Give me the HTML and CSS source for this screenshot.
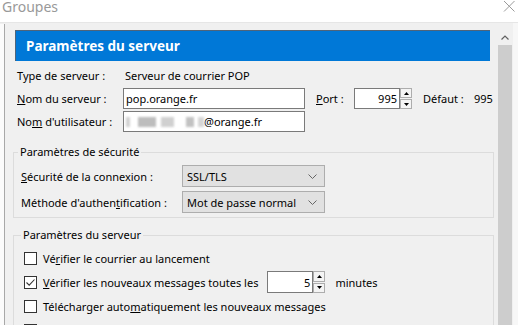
FILE: index.html
```html
<html>
<head>
    <title>Groupes</title>
    <link rel="stylesheet" href="styles.css">
</head>
<body>
    <div class="titlebar">
        <span class="title">Groupes</span>
        <svg class="close" width="12" height="11" viewBox="0 0 12 11"><path d="M1 0L11.5 10.5M11.5 0L1 10.5" stroke="#9a9a9a" stroke-width="1" fill="none"/></svg>
    </div>

    <div class="window">
        <div class="sidebar"></div>

        <div class="pane">
            <div class="header">Paramètres du serveur</div>

            <div class="row first">
                <span class="label">Type de serveur :</span>
                <span class="value">Serveur de courrier POP</span>
            </div>
            <div class="row">
                <span class="label"><u>N</u>om du serveur :</span>
                <span class="field host">pop.orange.fr</span>
                <span class="port-label"><u>P</u>ort :</span>
                <span class="field port">995</span>
                <span class="spin">
                    <span class="spin-btn"><svg width="5" height="3" viewBox="0 0 5 3"><path d="M2.5 0L5 3H0Z" fill="#000"/></svg></span>
                    <span class="spin-btn"><svg width="5" height="3" viewBox="0 0 5 3"><path d="M0 0H5L2.5 3Z" fill="#000"/></svg></span>
                </span>
                <span class="default">Défaut :</span>
                <span>995</span>
            </div>
            <div class="row">
                <span class="label">No<u>m</u> d'utilisateur :</span>
                <span class="field host">
                    <span class="blur">
                        <span class="blob b1"></span>
                        <span class="blob b2"></span>
                        <span class="blob b3"></span>
                        <span class="blob b4"></span>
                        <span class="blob b5"></span>
                    </span>@orange.fr
                </span>
            </div>

            <fieldset class="group">
                <legend>Paramètres de sécurité</legend>
                <div class="sel-row">
                    <span class="sel-label"><u>S</u>écurité de la connexion :</span>
                    <span class="select">SSL/TLS
                        <svg class="chev" width="9" height="5" viewBox="0 0 9 5"><path d="M0.5 0.5L4.5 4.5L8.5 0.5" stroke="#666" fill="none"/></svg>
                    </span>
                </div>
                <div class="sel-row">
                    <span class="sel-label">Méthode d'authen<u>t</u>ification :</span>
                    <span class="select">Mot de passe normal
                        <svg class="chev" width="9" height="5" viewBox="0 0 9 5"><path d="M0.5 0.5L4.5 4.5L8.5 0.5" stroke="#666" fill="none"/></svg>
                    </span>
                </div>
            </fieldset>

            <fieldset class="group checks">
                <legend>Paramètres du serveur</legend>
                <div class="check-row">
                    <span class="box"></span>
                    <span>Vé<u>r</u>ifier le courrier au lancement</span>
                </div>
                <div class="check-row">
                    <span class="box"><svg width="11" height="11" viewBox="0 0 11 11"><path d="M1.5 5.5L4.2 8.2L9.5 2.5" stroke="#333" stroke-width="1.1" fill="none"/></svg></span>
                    <span><u>V</u>érifier les nouveaux messages toutes les</span>
                    <span class="field minutes">5</span>
                    <span class="spin tall">
                        <span class="spin-btn"><svg width="5" height="3" viewBox="0 0 5 3"><path d="M2.5 0L5 3H0Z" fill="#000"/></svg></span>
                        <span class="spin-btn"><svg width="5" height="3" viewBox="0 0 5 3"><path d="M0 0H5L2.5 3Z" fill="#000"/></svg></span>
                    </span>
                    <span class="unit">minutes</span>
                </div>
                <div class="check-row">
                    <span class="box"></span>
                    <span>Télécharger auto<u>m</u>atiquement les nouveaux messages</span>
                </div>
                <div class="check-row">
                    <span class="box"></span>
                </div>
            </fieldset>
        </div>

        <div class="scrollbar">
            <div class="arrow"><svg width="8" height="5" viewBox="0 0 8 5"><path d="M0.5 4.5L4 1L7.5 4.5" stroke="#606060" stroke-width="1.2" fill="none"/></svg></div>
            <div class="thumb"></div>
        </div>
        <div class="edge"></div>
    </div>
</body>
</html>
```

FILE: styles.css
```css
body {
    margin: 0;
    width: 518px;
    height: 325px;
    overflow: hidden;
    background-color: #f0f0f0;
    font-family: "Noto Sans", sans-serif;
    font-size: 11px;
    color: #000;
}
u {
    text-underline-offset: 1px;
}
.titlebar {
    height: 22px;
    background-color: #fff;
    display: flex;
    justify-content: space-between;
    align-items: flex-start;
    padding: 0 3px 0 2px;
}
.title {
    font-size: 14px;
    line-height: 17px;
    margin-top: -2px;
    color: #999;
}
.close {
    margin-top: 1px;
}
.window {
    display: flex;
    height: 302px;
    border-top: 1px solid #e6e6e6;
}
.sidebar {
    width: 4px;
    margin-top: 1px;
    background-color: #fbfbfb;
    border-right: 1px solid #a8a8a8;
}
.pane {
    flex: 1;
    padding-top: 7px;
}
.header {
    height: 30px;
    margin: 0 7px 0 10px;
    padding-left: 10px;
    display: flex;
    align-items: center;
    background-color: #0078d7;
    border-top: 1px solid #4f647a;
    border-left: 1px solid #4f647a;
    color: #fff;
    font-weight: bold;
    font-size: 13.5px;
}
.row {
    height: 23px;
    padding-left: 12px;
    display: flex;
    align-items: center;
}
.row.first {
    margin-top: 3px;
}
.label {
    width: 106px;
    flex-shrink: 0;
}
.value {
    padding-left: 2px;
}
.field {
    height: 21px;
    box-sizing: border-box;
    border: 1px solid #7a7a7a;
    background-color: #fff;
    padding: 0 4px;
    display: flex;
    align-items: center;
    flex-shrink: 0;
}
.host {
    width: 182px;
    padding-left: 2px;
}
.port-label {
    width: 38px;
    margin-left: 11px;
}
.port {
    width: 46px;
    justify-content: flex-end;
    padding-right: 2px;
}
.spin {
    width: 12px;
    height: 21px;
    display: flex;
    flex-direction: column;
    gap: 1px;
}
.spin.tall {
    height: 22px;
}
.spin-btn {
    flex: 1;
    display: flex;
    align-items: center;
    justify-content: center;
    background-color: #f4f4f4;
    border: 1px solid #adadad;
}
.default {
    width: 51px;
    margin-left: 11px;
}
.blur {
    display: flex;
    align-items: center;
    width: 78px;
    height: 14px;
    filter: blur(1.2px);
}
.blob {
    height: 10px;
    background-color: #c4c4c4;
}
.b1 { width: 4px; background-color: #d2d2d2; margin-right: 8px; }
.b2 { width: 20px; background-color: #bdbdbd; margin-right: 5px; }
.b3 { width: 14px; background-color: #d0d0d0; margin-right: 12px; }
.b4 { width: 9px; background-color: #c2c2c2; margin-right: 4px; }
.b5 { width: 6px; background-color: #d6d6d6; }
.group {
    margin: 11px 3px 0 8px;
    padding: 5px 0 4px 7px;
    border: 1px solid #dcdcdc;
}
.group legend {
    margin-left: -3px;
    padding: 0 2px;
    line-height: 16px;
}
.sel-row {
    display: flex;
    align-items: center;
    height: 22px;
}
.sel-row + .sel-row {
    margin-top: 4px;
}
.sel-label {
    width: 161px;
    flex-shrink: 0;
}
.select {
    width: 143px;
    height: 22px;
    box-sizing: border-box;
    padding: 0 4px;
    display: flex;
    align-items: center;
    justify-content: space-between;
    background-color: #e1e1e1;
    border: 1px solid #adadad;
}
.chev {
    margin-right: 3px;
}
.checks {
    margin-top: 9px;
    padding: 3px 0 0 10px;
}
.check-row {
    height: 24px;
    display: flex;
    align-items: center;
    white-space: nowrap;
}
.box {
    width: 13px;
    height: 13px;
    box-sizing: border-box;
    margin-right: 6px;
    border: 1px solid #333;
    background-color: #fff;
    display: flex;
    align-items: center;
    justify-content: center;
    flex-shrink: 0;
}
.minutes {
    width: 46px;
    height: 22px;
    margin-left: 9px;
    justify-content: flex-end;
    padding-right: 2px;
}
.unit {
    margin-left: 10px;
}
.scrollbar {
    width: 16px;
    display: flex;
    flex-direction: column;
}
.arrow {
    height: 22px;
    display: flex;
    justify-content: center;
    align-items: flex-start;
    padding-top: 12px;
    box-sizing: border-box;
}
.thumb {
    flex: 1;
    margin: 0 1px;
    background-color: #cdcdcd;
}
.edge {
    width: 5px;
    background-color: #f7f7f7;
}
```
